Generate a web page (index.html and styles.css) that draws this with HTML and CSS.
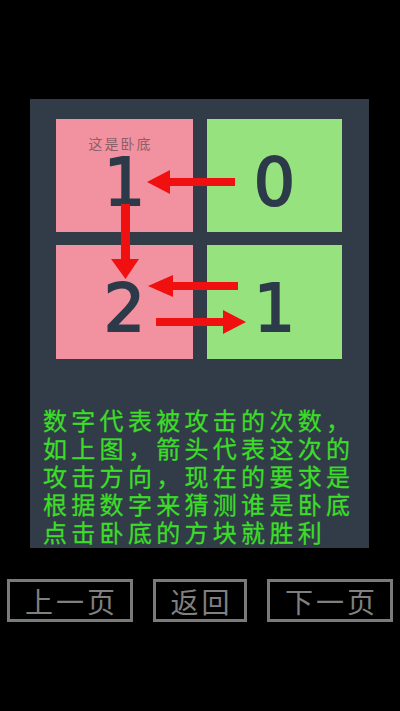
FILE: index.html
```html
<!DOCTYPE html>
<html lang="zh-CN">
<head>
<meta charset="utf-8">
<title>说明</title>
<link rel="stylesheet" href="styles.css">
</head>
<body>
<div class="screen">
  <div class="panel">
    <div class="board">
      <div class="grid">
        <div class="cell pink">
          <span class="label">这是卧底</span>
          <span class="num">1</span>
        </div>
        <div class="cell green"><span class="num">0</span></div>
        <div class="cell pink"><span class="num">2</span></div>
        <div class="cell green"><span class="num">1</span></div>
      </div>
      <svg class="arrows" width="339" height="300" viewBox="0 0 339 300" xmlns="http://www.w3.org/2000/svg">
        <g fill="#f01010">
          <rect x="137" y="79" width="68" height="8"/>
          <polygon points="117,83 140,71 140,95"/>
          <rect x="91" y="105" width="9" height="58"/>
          <polygon points="95.5,180 81,160 109,160"/>
          <rect x="141" y="183" width="67" height="8"/>
          <polygon points="118,187 143,176 143,198"/>
          <rect x="126" y="219" width="70" height="8"/>
          <polygon points="216,223 193,211 193,235"/>
        </g>
      </svg>
    </div>
    <div class="desc">
      <div class="line">数字代表被攻击的次数，</div>
      <div class="line">如上图，箭头代表这次的</div>
      <div class="line">攻击方向，现在的要求是</div>
      <div class="line">根据数字来猜测谁是卧底</div>
      <div class="line">点击卧底的方块就胜利</div>
    </div>
  </div>
  <div class="buttons">
    <button class="btn wide">上一页</button>
    <button class="btn narrow">返回</button>
    <button class="btn wide">下一页</button>
  </div>
</div>
</body>
</html>
```

FILE: styles.css
```css
html, body {
  margin: 0;
  padding: 0;
  background: #000;
}

body {
  width: 400px;
  height: 711px;
  overflow: hidden;
  font-family: "Noto Sans CJK SC", "DejaVu Sans", sans-serif;
}

.screen {
  display: flex;
  flex-direction: column;
  padding-top: 99px;
}

.panel {
  margin-left: 30px;
  width: 339px;
  height: 449px;
  background: #323c48;
  box-sizing: border-box;
  padding-top: 20px;
}

.board {
  position: relative;
}

.grid {
  display: grid;
  grid-template-columns: 137px 135px;
  grid-template-rows: 113px 114px;
  column-gap: 14px;
  row-gap: 13px;
  margin-left: 26px;
}

.cell {
  display: flex;
  flex-direction: column;
  align-items: center;
  padding-top: 32px;
  box-sizing: border-box;
}

.pink { background: #f292a0; }
.green { background: #96e27e; }

.num {
  font-family: "DejaVu Sans", sans-serif;
  font-size: 65px;
  line-height: 64px;
  color: #2c3a4a;
  -webkit-text-stroke: 2px #2c3a4a;
}

.pink:first-child {
  padding-top: 16px;
}

.label {
  font-size: 14px;
  line-height: 16px;
  letter-spacing: 2px;
  color: #8c5e68;
  margin-right: 8px;
}

.arrows {
  position: absolute;
  left: 0;
  top: -20px;
}

.desc {
  margin: 47px 0 0 13px;
  display: flex;
  flex-direction: column;
}

.line {
  font-size: 24px;
  line-height: 28px;
  height: 28px;
  letter-spacing: 4.3px;
  color: #3cdc28;
  white-space: nowrap;
  -webkit-text-stroke: 0.3px #3cdc28;
}

.buttons {
  display: flex;
  justify-content: space-between;
  padding: 0 7px;
  margin-top: 31px;
}

.btn {
  height: 43px;
  box-sizing: border-box;
  border: 3px solid #7a7a7a;
  background: #000;
  color: #808080;
  font-family: "Noto Sans CJK SC", "DejaVu Sans", sans-serif;
  font-size: 28px;
  letter-spacing: 3px;
  padding: 0 0 0 3px;
  line-height: 36px;
  border-radius: 0;
}

.wide { width: 126px; }
.narrow { width: 94px; }
```
